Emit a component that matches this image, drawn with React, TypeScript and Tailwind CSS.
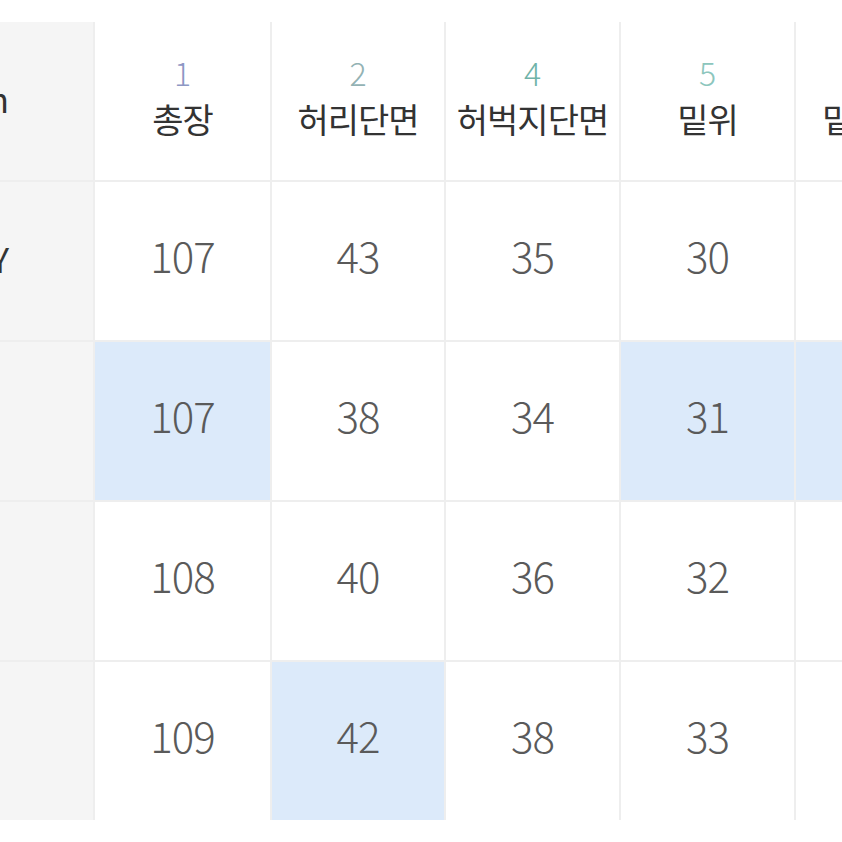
const FONT = { fontFamily: '"Noto Sans CJK KR", "Noto Sans", sans-serif' };

type Header = { no: string; label: string; color: string };

const headers: Header[] = [
  { no: "1", label: "총장", color: "text-[#8d97c4]" },
  { no: "2", label: "허리단면", color: "text-[#93b2b4]" },
  { no: "4", label: "허벅지단면", color: "text-[#6fb3a8]" },
  { no: "5", label: "밑위", color: "text-[#8cc6bd]" },
  { no: "6", label: "밑단단면", color: "text-[#8cc6bd]" },
];

const rows: { label: string; values: string[]; hl: number[] }[] = [
  { label: "MY", values: ["107", "43", "35", "30", "20"], hl: [] },
  { label: "", values: ["107", "38", "34", "31", "21"], hl: [0, 3, 4] },
  { label: "", values: ["108", "40", "36", "32", "22"], hl: [] },
  { label: "", values: ["109", "42", "38", "33", "23"], hl: [1] },
];

function LabelCell({ text }: { text: string }) {
  return (
    <div className="flex items-center justify-end overflow-hidden bg-[#f5f5f5] pb-[6px] pr-[84px]">
      <span className="whitespace-nowrap text-[34px] text-[#333]">{text}</span>
    </div>
  );
}

export default function App() {
  return (
    <div className="h-[842px] w-[842px] overflow-hidden bg-white pt-[22px]" style={FONT}>
      <div className="grid w-[1100px] grid-cols-[93px_175px_172px_173px_173px_173px] grid-rows-[158px_158px_158px_158px_158px] gap-[2px] bg-[#eeeeee]">
        <LabelCell text="Section" />
        {headers.map((h) => (
          <div key={h.no} className="flex flex-col items-center justify-center bg-white pb-[10px]">
            <span className={`text-[32px] font-light leading-none ${h.color}`}>{h.no}</span>
            <span className="mt-[14px] whitespace-nowrap text-[34px] leading-none tracking-[-1px] text-[#333]">
              {h.label}
            </span>
          </div>
        ))}
        {rows.map((r, ri) => (
          <>
            <LabelCell key={"l" + ri} text={r.label} />
            {r.values.map((v, i) => (
              <div
                key={ri + "-" + i}
                className={`flex items-center justify-center ${r.hl.includes(i) ? "bg-[#dceafa]" : "bg-white"}`}
              >
                <span className="pb-[14px] text-[42px] font-light tracking-[-1px] text-[#5a5a5a]">{v}</span>
              </div>
            ))}
          </>
        ))}
      </div>
    </div>
  );
}
